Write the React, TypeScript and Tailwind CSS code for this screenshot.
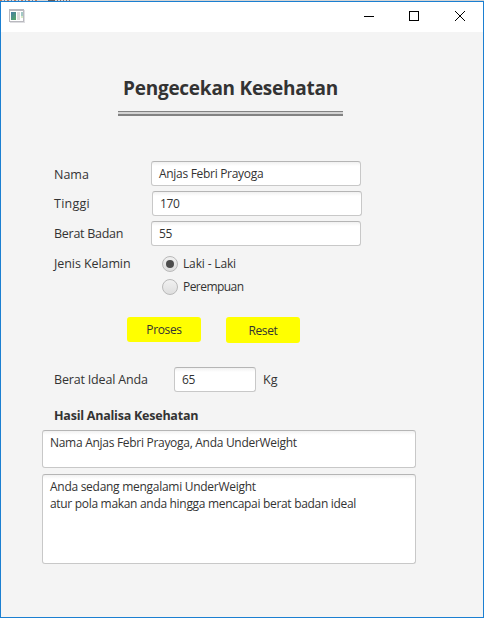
import type { ReactNode } from "react";

const box =
  "rounded-[3px] border border-[#c8c8c8] border-t-[#b5b5b5] bg-white bg-linear-to-b from-[#f1f1f1] to-white to-[4px] text-[12px] text-[#333]";

function Label({ children, className = "" }: { children: ReactNode; className?: string }) {
  return <span className={`h-[25px] w-[97px] shrink-0 whitespace-nowrap text-[12.5px] leading-[25px] ${className}`}>{children}</span>;
}

function Field({ value, className }: { value: ReactNode; className: string }) {
  return <div className={`${box} h-[25px] pl-[7px] leading-[24px] whitespace-nowrap ${className}`}>{value}</div>;
}

function Radio({ label, checked }: { label: ReactNode; checked?: boolean }) {
  return (
    <div className="flex h-[23px] items-center gap-[5px] text-[12px]">
      <span className="flex size-4 items-center justify-center rounded-full border border-[#b9b9b9] bg-linear-to-b from-[#f1f1f1] to-[#dedede]">
        {checked && <span className="size-2 rounded-full bg-[#4d4d4d]" />}
      </span>
      {label}
    </div>
  );
}

export default function App() {
  return (
    <div className="flex h-[618px] w-[484px] flex-col bg-[#f4f4f4] font-['Open_Sans','Noto_Sans',sans-serif] text-[#333]">
      <div className="flex h-px bg-[#d5d5d5]">
        <div className="w-[38px] bg-[repeating-linear-gradient(90deg,#b97c60_0_2px,#d8d8d8_2px_4px,#657f98_4px_5px,#ddd_5px_7px)]" />
        <div className="ml-[10px] w-[7px] bg-[#625c5b]" />
        <div className="w-[17px] bg-[repeating-linear-gradient(90deg,#d8d8d8_0_2px,#876b62_2px_3px)]" />
      </div>
      <div className="h-[617px] border border-[#1b7fd1]">
        <header className="flex h-[30px] items-center justify-between bg-white pl-2">
          <svg className="-mt-0.5" width="16" height="14" viewBox="0 0 16 14" shapeRendering="crispEdges">
            <defs>
              <linearGradient id="pane" x2="0.7" y2="1">
                <stop stopColor="#467da6" />
                <stop offset="1" stopColor="#54a36c" />
              </linearGradient>
            </defs>
            <path fill="#b9b9bf" d="M0 0h15v13H0z" />
            <path fill="#dedee1" d="M15 1h1v13H1v-1h14z" />
            <path fill="#fff" d="M1 2h13v10H1z" />
            <path fill="url(#pane)" d="M2 3h5v8H2z" />
            <path fill="#ddd" d="M8 3h3v8H8z" />
            <path fill="#a3c9c5" d="M12 3h2v5h-2z" />
            <path fill="#d8ebc6" d="M12 7h2v2h-2z" />
          </svg>
          <svg width="120" height="30" viewBox="0 0 120 30" fill="none" stroke="#000">
            <path d="M1 14.5h10M46.500 9.500h9v9h-9z" shapeRendering="crispEdges" />
            <path d="m92 9 10 10M102 9 92 19" strokeWidth="1" />
          </svg>
        </header>
        <main className="pl-[41px] pt-[42px]">
          <h1 className="ml-[81px] h-[37px] whitespace-nowrap text-[19px] leading-[28px] font-bold tracking-[-0.25px]">Pengecekan Kesehatan</h1>
          <div className="ml-[76px] h-[5px] w-[225px] border-t border-b-2 border-[#828282] bg-[#d3d3d3]" />
          <section className="ml-3 mt-[45px] flex flex-col gap-[5px]">
            <div className="flex"><Label className="pt-px">Nama</Label><Field className="w-[210px] tracking-[-0.3px]" value="Anjas Febri Prayoga" /></div>
            <div className="flex"><Label className="tracking-[0.25px]">Tinggi</Label><Field className="ml-px w-[210px] tracking-[-0.3px]" value="170" /></div>
            <div className="flex"><Label className="tracking-[-0.27px]">Berat Badan</Label><Field className="w-[210px] tracking-[-0.3px]" value="55" /></div>
            <div className="flex">
              <Label className="tracking-[-0.08px]">Jenis Kelamin</Label>
              <div className="ml-[11px] mt-px mb-px">
                <Radio label={<span className="tracking-[-0.15px]">Laki - Laki</span>} checked />
                <Radio label={<span className="tracking-[-0.55px]">Perempuan</span>} />
              </div>
            </div>
          </section>
          <div className="ml-[85px] mt-[18px] flex h-[26px] items-start gap-[25px] text-[12px] leading-[25px] tracking-[-0.35px]">
            <button className="h-[25px] w-[74px] rounded-[3px] bg-[#ff0]">Proses</button>
            <button className="h-[26px] w-[74px] rounded-[3px] bg-[#ff0]">Reset</button>
          </div>
          <div className="ml-3 mt-[24px] flex">
            <span className="w-[120px] text-[12.5px] leading-[25px] tracking-[-0.18px]">Berat Ideal Anda</span>
            <Field className="w-[82px] tracking-[-0.3px]" value="65" />
            <span className="ml-[7px] text-[12.5px] leading-[25px]">Kg</span>
          </div>
          <h2 className="ml-3 mt-[15px] h-[23px] whitespace-nowrap text-[12.500px] leading-[18px] font-bold tracking-[-0.23px]">Hasil Analisa Kesehatan</h2>
          <div className={`${box} h-[38px] w-[374px] whitespace-nowrap pl-[7px] pt-[3px] leading-[17px] tracking-[-0.29px]`}>
            Nama Anjas Febri Prayoga, Anda UnderWeight
          </div>
          <div className={`${box} mt-[6px] h-[90px] w-[374px] whitespace-nowrap pl-[7px] pt-[3px] leading-[17px]`}>
            <p className="tracking-[-0.28px]">Anda sedang mengalami UnderWeight</p>
            <p className="tracking-[-0.31px]">atur pola makan anda hingga mencapai berat badan ideal</p>
          </div>
        </main>
      </div>
    </div>
  );
}
